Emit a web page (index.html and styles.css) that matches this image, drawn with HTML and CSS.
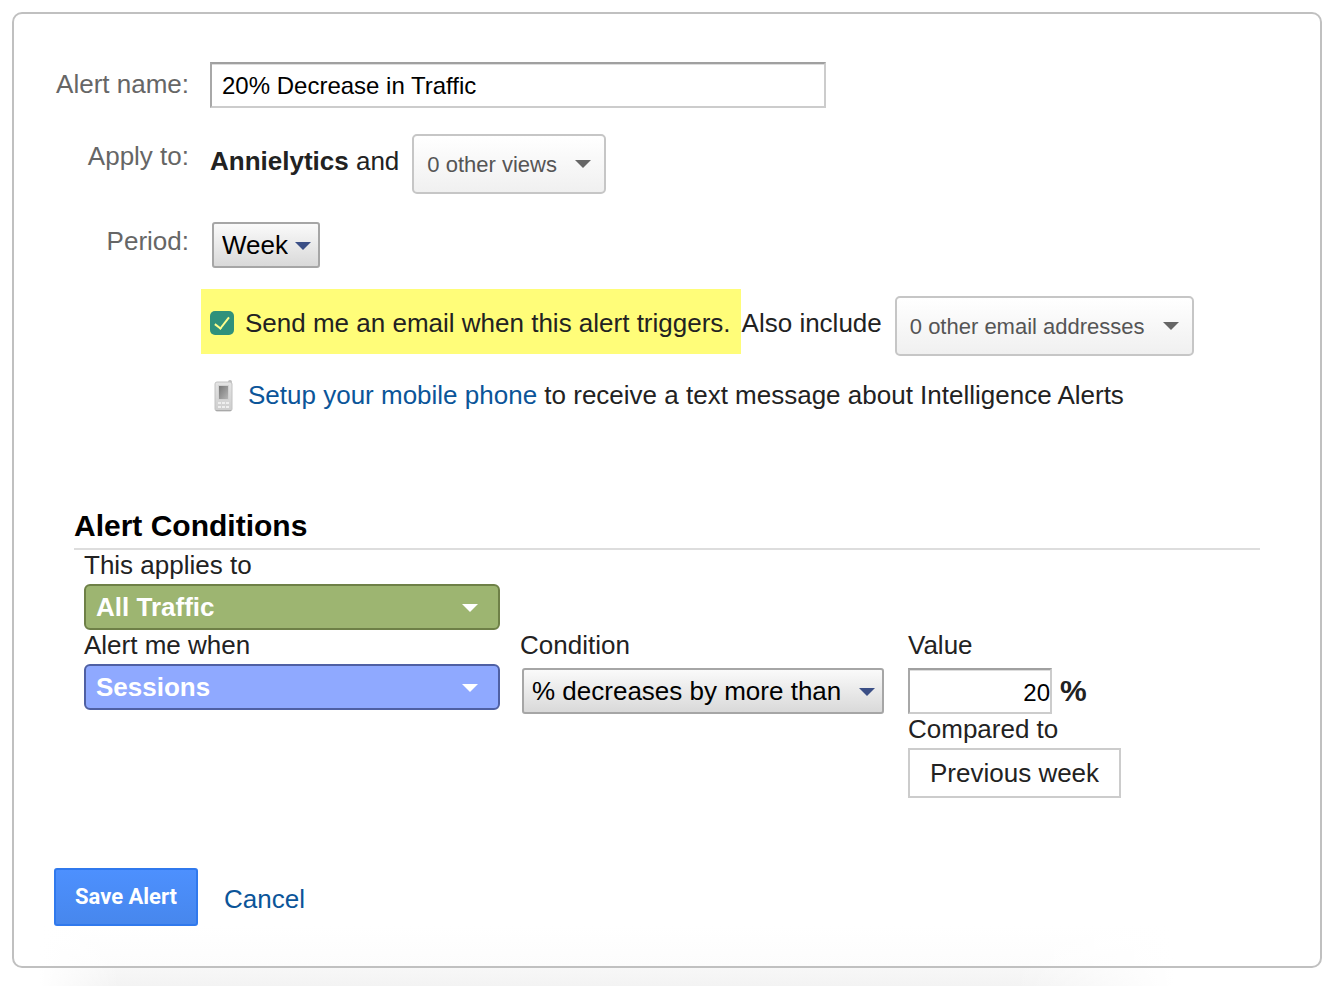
FILE: index.html
```html
<!DOCTYPE html>
<html lang="en">
<head>
  <meta charset="UTF-8" />
  <meta name="viewport" content="width=device-width, initial-scale=1" />
  <title>Alert settings</title>
  <link rel="stylesheet" href="styles.css">
</head>
<body>
  <form class="panel">
    <div class="settings">
      <div class="row">
        <label class="row-label" for="alert-name">Alert name:</label>
        <input class="text-input name-input" type="text" id="alert-name" value="20% Decrease in Traffic" />
      </div>

      <div class="row">
        <span class="row-label">Apply to:</span>
        <div class="row-body">
          <span class="row-text"><b>Annielytics</b> and</span>
          <button class="menu-button" type="button">0 other views</button>
        </div>
      </div>

      <div class="row row-period">
        <label class="row-label" for="period">Period:</label>
        <div class="select select-gray">
          <select id="period">
            <option>Week</option>
          </select>
        </div>
      </div>

      <div class="row">
        <div class="row-body">
          <label class="highlight" for="send-email">
            <input type="checkbox" id="send-email" checked />
            <span>Send me an email when this alert triggers.</span>
          </label>
          <span class="row-text">Also include</span>
          <button class="menu-button" type="button">0 other email addresses</button>
        </div>
      </div>

      <div class="row">
        <div class="row-body row-phone">
          <svg class="phone-icon" width="20" height="32" viewBox="0 0 20 32" aria-hidden="true">
            <defs>
              <linearGradient id="screen" x1="0" y1="0" x2="1" y2="1">
                <stop offset="0" stop-color="#777" />
                <stop offset="1" stop-color="#b5b5b5" />
              </linearGradient>
              <linearGradient id="body" x1="0" y1="0" x2="0" y2="1">
                <stop offset="0" stop-color="#e4e4e4" />
                <stop offset="1" stop-color="#cdcdcd" />
              </linearGradient>
            </defs>
            <rect x="14" y="0" width="4" height="6" rx="2" fill="#bdbdbd" />
            <rect x="1" y="2" width="17" height="29" rx="2" fill="url(#body)" stroke="#c2c2c2" />
            <path d="M2 30.500h15" stroke="#a9a9a9" />
            <rect x="4" y="5" width="11" height="15" fill="#d2d2d2" />
            <rect x="5" y="6" width="9" height="13" fill="url(#screen)" />
            <path d="M4 23h3M8 23h3M12 23h3M4 27h3M8 27h3M12 27h3" stroke="#eee" stroke-width="2" />
          </svg>
          <span><a href="#">Setup your mobile phone</a> to receive a text message about Intelligence Alerts</span>
        </div>
      </div>
    </div>

    <section class="conditions">
      <h2>Alert Conditions</h2>
      <div class="condition-grid">
        <div class="segment">
          <label for="segment">This applies to</label>
          <div class="select select-color select-green">
            <select id="segment">
              <option>All Traffic</option>
            </select>
          </div>
        </div>
        <div>
          <label for="metric">Alert me when</label>
          <div class="select select-color select-blue">
            <select id="metric">
              <option>Sessions</option>
            </select>
          </div>
        </div>
        <div>
          <label for="condition">Condition</label>
          <div class="select select-gray select-wide">
            <select id="condition">
              <option>% decreases by more than</option>
            </select>
          </div>
        </div>
        <div>
          <label for="value">Value</label>
          <div class="value-line">
            <input class="text-input value-input" type="text" id="value" value="20" />
            <b>%</b>
          </div>
          <label for="compared">Compared to</label>
          <output class="compared" id="compared">Previous week</output>
        </div>
      </div>
    </section>

    <div class="actions">
      <button class="save-button" type="submit">Save Alert</button>
      <a href="#">Cancel</a>
    </div>
  </form>
</body>
</html>
```
FILE: styles.css
```css
* {
  box-sizing: border-box;
}

/* soft shadow along the bottom edge, faded out at both sides */
body {
  margin: 0;
  padding: 12px;
  min-height: 100vh;
  background:
    linear-gradient(to right, #fff 3%, transparent 9%, transparent 76%, #fff 88%),
    linear-gradient(to top, #f3f3f3, #f7f7f7 17px, #fcfcfc 20px, #fff 60px);
  color: #222;
  font-family: Arial, "Liberation Sans", sans-serif;
  font-size: 26px;
  line-height: 34px;
}

a {
  color: #0b5599;
  text-decoration: none;
}

a:hover {
  text-decoration: underline;
}

label {
  display: block;
}

input,
select,
button {
  margin: 0;
  font-family: inherit;
}

.panel {
  border: 2px solid #c0c0c0;
  border-radius: 10px;
  padding: 48px 40px 40px;
}

/* top settings */
.row {
  display: grid;
  grid-template-columns: 135px 1fr;
  column-gap: 21px;
  align-items: start;
  margin-bottom: 28px;
}

.row:first-child {
  margin-bottom: 26px;
}

.row-label {
  padding-top: 5px;
  color: #666;
  text-align: right;
}

.row-period .row-label {
  padding-top: 2px;
}

.row-period .select {
  justify-self: start;
  margin-left: 2px;
}

.row-body {
  grid-column: 2;
  display: flex;
  align-items: flex-start;
  gap: 13px;
  white-space: nowrap;
}

.row-text {
  padding-top: 10px;
}

.text-input {
  height: 46px;
  border: 2px solid #ccc;
  border-top-color: #a0a0a0;
  border-left-color: #a8a8a8;
  border-radius: 0;
  box-shadow: inset 0 1px #ddd;
  background: #fff;
  color: #000;
  font-size: 24px;
}

.name-input {
  width: 100%;
  max-width: 616px;
  padding: 4px 10px 2px;
}

.menu-button {
  display: flex;
  align-items: center;
  gap: 18px;
  height: 60px;
  padding: 2px 13px 0;
  border: 2px solid #c6c6c6;
  border-radius: 5px;
  background: linear-gradient(#fff, #f0f0f0);
  color: #555;
  font-size: 22px;
}

.menu-button::after {
  content: "";
  margin-bottom: 2px;
  border: 8px solid transparent;
  border-top-color: #666;
  border-bottom: 0;
}

/* drop-downs */
.select {
  position: relative;
}

.select select {
  appearance: none;
  display: block;
  width: 100%;
  height: 46px;
  padding: 0 30px 0 8px;
  font-size: 26px;
}

.select::after {
  content: "";
  position: absolute;
  top: 20px;
  right: 9px;
  border: 8px solid transparent;
  border-top-color: #3b4f86;
  border-bottom: 0;
  pointer-events: none;
}

.select-gray select {
  border: 2px solid #a6a6a6;
  border-radius: 3px;
  background: linear-gradient(#fafafa, #d9d9d9);
  color: #000;
}

.select-wide {
  margin: 4px 4px 0 2px;
}

.select-color select {
  padding-left: 10px;
  border: 2px solid;
  border-radius: 6px;
  color: #fff;
  font-weight: bold;
}

.select-color::after {
  right: 22px;
  border-top-color: #fff;
}

.select-green select {
  background: #9db571;
  border-color: #6e8047;
}

.select-blue select {
  background: #8fa9ff;
  border-color: #4f60a3;
}

/* email and phone */
.highlight {
  display: flex;
  align-items: center;
  gap: 11px;
  margin: -7px -12px 0 -9px;
  padding: 17px 10px 14px 9px;
  background: #fffd79;
}

.highlight input {
  appearance: none;
  display: grid;
  place-content: center;
  width: 24px;
  height: 24px;
  border-radius: 5px;
  background: #2f917b;
}

.highlight input:checked::before {
  content: "";
  box-sizing: border-box;
  width: 8px;
  height: 15px;
  margin-bottom: 3px;
  border: solid #fffd8c;
  border-width: 0 2px 2px 0;
  transform: rotate(38deg);
}

.row:last-child {
  margin-top: -6px;
  margin-bottom: 0;
}

.row-phone {
  gap: 14px;
}

.phone-icon {
  flex: none;
  margin: 2px 0 0 4px;
}

/* alert conditions */
.conditions {
  margin: 94px 20px 70px;
}

.conditions h2 {
  margin: 0;
  padding-bottom: 2px;
  border-bottom: 2px solid #ddd;
  color: #000;
  font-size: 30px;
  line-height: 40px;
}

.condition-grid {
  display: grid;
  grid-template-columns: 416px 368px 1fr;
  column-gap: 20px;
  padding-left: 10px;
}

.condition-grid label {
  padding-bottom: 4px;
  line-height: 30px;
}

.segment {
  grid-column: 1 / -1;
}

.segment .select {
  width: 416px;
}

.value-line {
  display: flex;
  align-items: center;
  gap: 8px;
  padding-top: 4px;
}

.value-line b {
  font-size: 30px;
}

.value-input {
  width: 144px;
  padding: 4px 0 0;
  text-align: right;
}

.compared {
  display: block;
  width: fit-content;
  padding: 6px 20px;
  border: 2px solid #ccc;
}

/* footer */
.actions {
  display: flex;
  align-items: center;
  gap: 26px;
}

.actions a {
  padding-top: 4px;
}

.save-button {
  height: 58px;
  padding: 0 19px 2px;
  border: 2px solid #3079ed;
  border-radius: 3px;
  background: linear-gradient(#4d90fe, #4787ed);
  color: #fff;
  font-family: Roboto, sans-serif;
  font-size: 22px;
  font-weight: bold;
}
```
